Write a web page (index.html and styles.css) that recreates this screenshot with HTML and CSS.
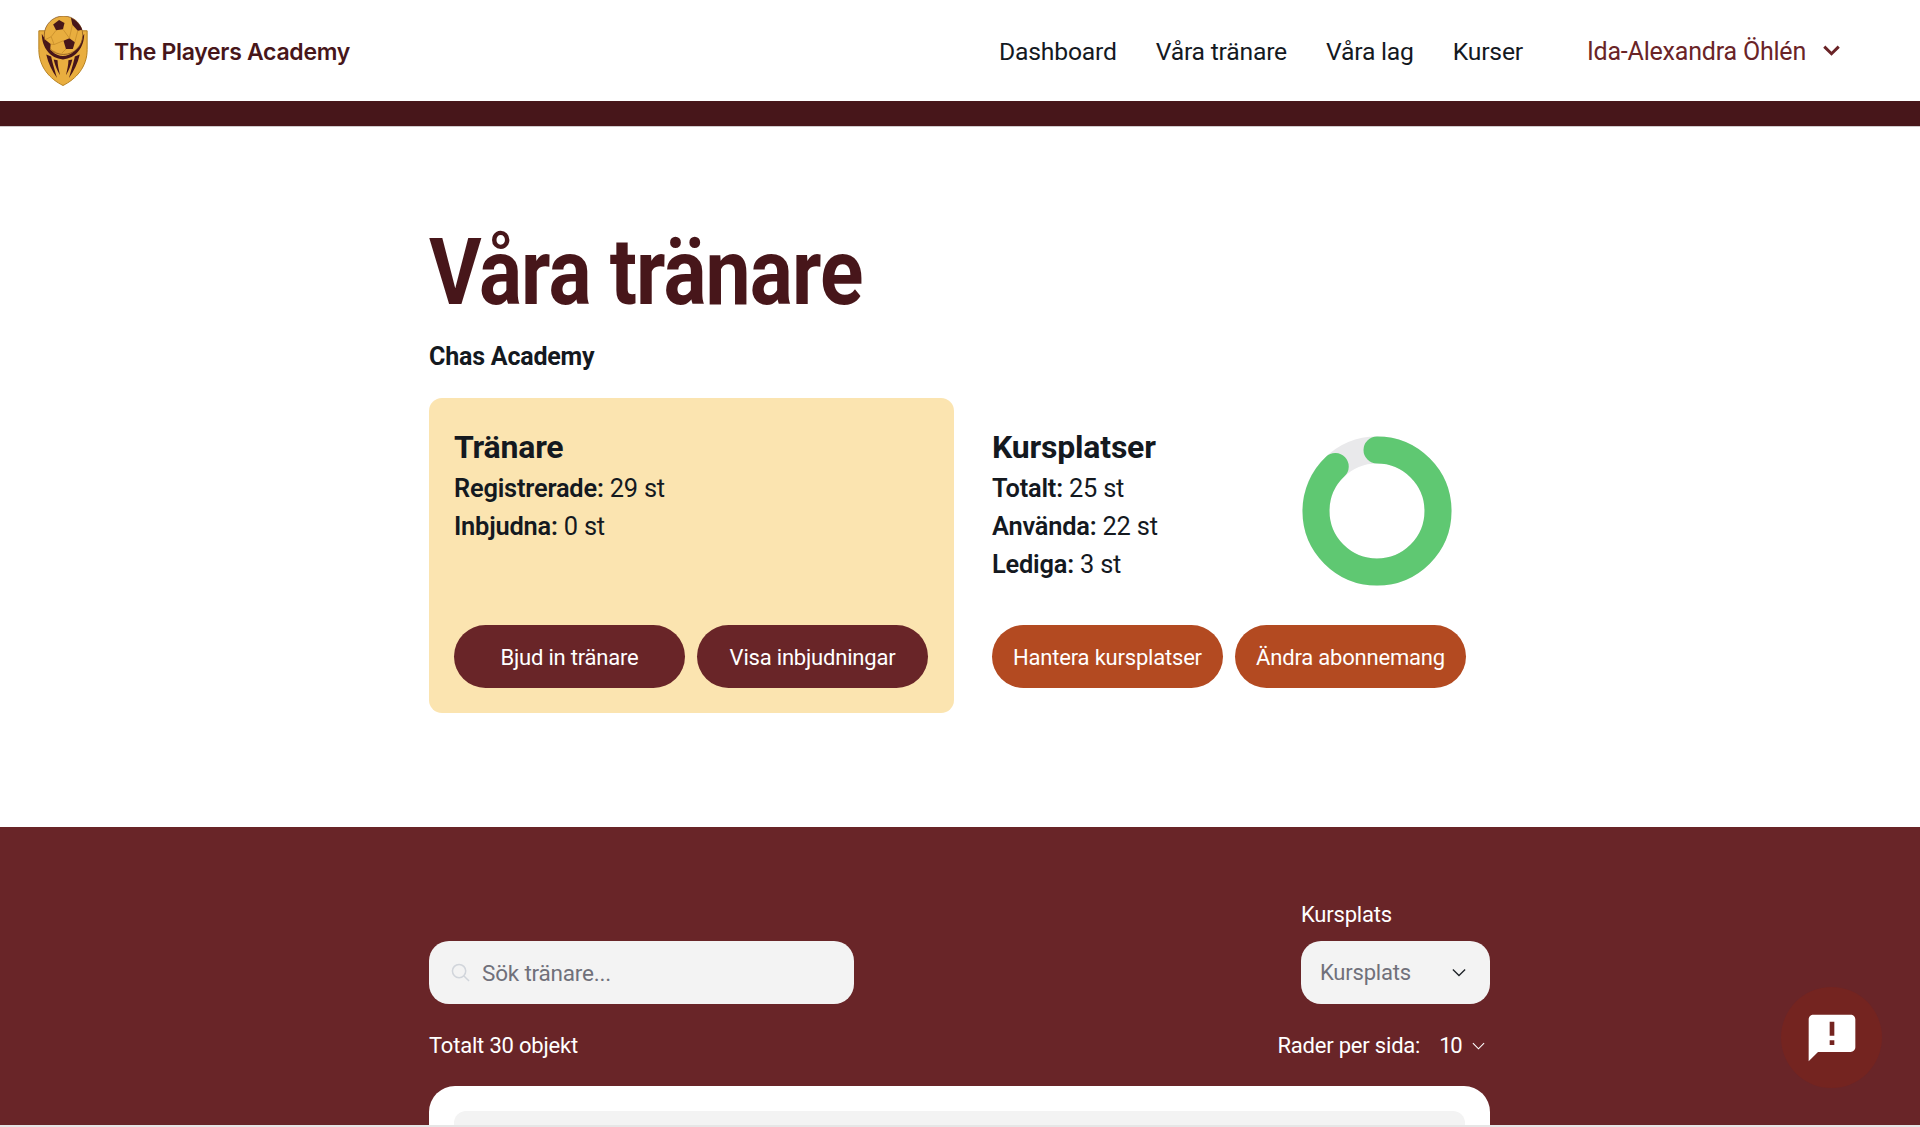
FILE: index.html
```html
<!DOCTYPE html>
<html lang="sv">
<head>
<meta charset="utf-8">
<title>Våra tränare</title>
<link rel="stylesheet" href="styles.css">
</head>
<body>
<header class="topbar">
  <a class="brand" href="#">
    <svg class="logo" viewBox="0 0 50 71" aria-hidden="true">
      <path d="M0.5 15H6L44 15H49.5V34C49.5 52 38 64 25 70.5C12 64 0.5 52 0.5 34Z" fill="#e9ae3f" stroke="#b5801f" stroke-width="1"/>
      <path d="M3.5 18C3.5 32 12 43 25 44C38 43 46.5 32 46.5 18L43 24C40 34 33 40.5 25 40.5C17 40.5 10 34 7 24Z" fill="#47161a"/>
      <path d="M8 39C10 48 14 56 19 63C16 53 14 46 13 41ZM15.500 44C17 50 19 55 22 60C20.500 54 19.500 49 19.500 45ZM42 39C40 48 36 56 31 63C34 53 36 46 37 41ZM34.500 44C33 50 31 55 28 60C29.500 54 30.500 49 30.500 45Z" fill="#47161a"/>
      <circle cx="25.500" cy="19.500" r="19.500" fill="#e9ae3f" stroke="#7a4a1c" stroke-width="0.7"/>
      <g fill="#47161a">
        <path d="M15 8.500L21 4L26.500 7L25 13.500L18 14.500Z"/>
        <path d="M33 1.800C38 4 42.500 8.500 44.500 14L40 15L34.500 9Z"/>
        <path d="M25.500 25L31.500 22.500L37 26.500L35 33.500L28 33.500Z"/>
        <path d="M7 24L12.500 28.500L12 34C9 32 7 28.500 6.200 24.500Z"/>
      </g>
      <g fill="none" stroke="#c58c2a" stroke-width="0.8">
        <path d="M18 14.500L13 21L16 29L25.500 25M25 13.500L31.500 22.500M34.500 9L31.500 22.500M40 15L37 26.500M13 21L7 24M16 29L12.500 28.500M28 33.500L24 37.500M12 34L18 37"/>
      </g>
    </svg>
    <span class="brand-name">The Players Academy</span>
  </a>
  <nav class="nav">
    <a href="#">Dashboard</a>
    <a href="#">Våra tränare</a>
    <a href="#">Våra lag</a>
    <a href="#">Kurser</a>
  </nav>
  <button class="user">
    <span>Ida-Alexandra Öhlén</span>
    <svg class="user-chev" viewBox="0 0 16 10" aria-hidden="true"><path d="M1.200 1.300L8 8L14.800 1.300" fill="none" stroke="currentColor" stroke-width="2.800"/></svg>
  </button>
</header>
<div class="band"></div>

<main>
  <section class="intro">
    <div class="wrap">
      <h1>Våra tränare</h1>
      <p class="org">Chas Academy</p>
      <div class="stats">
        <article class="card">
          <div class="info">
            <h2>Tränare</h2>
            <p><b>Registrerade:</b> 29 st</p>
            <p><b>Inbjudna:</b> 0 st</p>
          </div>
          <div class="actions">
            <button class="pill pill-dark">Bjud in tränare</button>
            <button class="pill pill-dark">Visa inbjudningar</button>
          </div>
        </article>
        <article class="card card-plain">
          <div class="info-row">
            <div class="info">
              <h2>Kursplatser</h2>
              <p><b>Totalt:</b> 25 st</p>
              <p><b>Använda:</b> 22 st</p>
              <p><b>Lediga:</b> 3 st</p>
            </div>
            <svg class="donut" viewBox="0 0 150 150" aria-hidden="true">
              <circle cx="75" cy="75" r="61" fill="none" stroke="#e9e9eb" stroke-width="27"/>
              <circle cx="75" cy="75" r="61" fill="none" stroke="#5fc872" stroke-width="27" stroke-linecap="round" pathLength="100" stroke-dasharray="88 100" transform="rotate(-90 75 75)"/>
            </svg>
          </div>
          <div class="actions">
            <button class="pill pill-orange">Hantera kursplatser</button>
            <button class="pill pill-orange">Ändra abonnemang</button>
          </div>
        </article>
      </div>
    </div>
  </section>

  <section class="list">
    <div class="wrap">
      <div class="filters">
        <label class="search">
          <svg class="search-icon" viewBox="0 0 20 20" aria-hidden="true"><circle cx="8.500" cy="8.500" r="7" fill="none" stroke="currentColor" stroke-width="1.600"/><path d="M13.600 13.600L19 19" fill="none" stroke="currentColor" stroke-width="1.600"/></svg>
          <span>Sök tränare...</span>
        </label>
        <div class="filter">
          <span class="filter-label">Kursplats</span>
          <div class="select">
            <span>Kursplats</span>
            <svg class="select-chev" viewBox="0 0 16 10" aria-hidden="true"><path d="M1 1.500L8 8.500L15 1.500" fill="none" stroke="currentColor" stroke-width="1.500"/></svg>
          </div>
        </div>
      </div>
      <div class="meta">
        <span>Totalt 30 objekt</span>
        <div class="rows">
          <span>Rader per sida:</span>
          <span class="rows-value">10</span>
          <svg class="rows-chev" viewBox="0 0 16 10" aria-hidden="true"><path d="M1 1.500L8 8.500L15 1.500" fill="none" stroke="currentColor" stroke-width="1.400"/></svg>
        </div>
      </div>
      <div class="table"><div class="table-head"></div></div>
    </div>
  </section>
</main>

<button class="feedback" aria-label="Feedback">
  <svg viewBox="0 0 24 24" aria-hidden="true"><path d="M20 2H4c-1.100 0-1.990.900-1.990 2L2 22l4-4h14c1.100 0 2-.900 2-2V4c0-1.100-.900-2-2-2zm-7 9h-2V5h2v6zm0 4h-2v-2h2v2z" fill="#fff"/></svg>
</button>
</body>
</html>
```

FILE: styles.css
```css
* { box-sizing: border-box; }
body {
  margin: 0;
  height: 1127px;
  overflow: hidden;
  background: #fff;
  border-bottom: 2px solid #e6e6e6;
  color: #14191f;
  font-family: Roboto, "Liberation Sans", sans-serif;
  font-size: 25.400px;
  letter-spacing: -0.2px;
}
button { font: inherit; letter-spacing: inherit; border: 0; cursor: pointer; }
a { color: inherit; text-decoration: none; }
p, h1, h2 { margin: 0; }

.topbar { height: 101px; display: flex; align-items: center; padding: 0 80px 0 38px; font-size: 25px; }
.brand { display: flex; align-items: center; gap: 26px; margin-right: auto; }
.logo { width: 50px; height: 70px; display: block; }
.brand-name { margin-top: 2px; font-family: Inter, Roboto, sans-serif; font-size: 23px; font-weight: 600; color: #47161a; letter-spacing: -0.3px; }
.nav { display: flex; gap: 39px; margin-top: 2px; font-size: 24.700px; }
.user { display: flex; align-items: center; gap: 17px; margin: 2px 0 0 64px; padding: 0; background: none; color: #6a2427; }
.user-chev { width: 17px; height: 11px; display: block; margin-top: -3px; }
.band { height: 26px; background: #47161a; border-bottom: 1px solid #cfcacb; }

.wrap { width: 1061px; margin-left: 429px; }

.intro { height: 700px; padding-top: 91px; }
h1 { font-size: 92px; line-height: 110px; font-weight: 700; color: #47161a; letter-spacing: -1px; transform: scaleX(0.875); transform-origin: left center; }
.org { margin-top: 10px; font-weight: 700; line-height: 38px; font-size: 25px; }
.stats { display: flex; margin-top: 22px; gap: 13px; }
.card { flex: none; width: 525px; height: 315px; padding: 25px; background: #fbe4b0; border-radius: 13px; display: flex; flex-direction: column; justify-content: space-between; }
.card-plain { background: none; }
.info-row { display: flex; justify-content: space-between; padding-right: 15px; }
h2 { margin-top: 2px; font-size: 32px; line-height: 44px; font-weight: 700; }
.info p { line-height: 38px; }
.info b { font-weight: 600; }
.donut { width: 150px; height: 150px; display: block; margin-top: 13px; }
.actions { display: flex; gap: 12px; }
.pill { width: 231px; height: 63px; border-radius: 32px; color: #fff; font-size: 22px; padding: 1px 0 0; }
.pill-dark { background: #692528; }
.pill-orange { background: #b34a21; }

.list { height: 298px; overflow: hidden; background: #692528; color: #fff; }
.list .wrap { padding-top: 74px; }
.filters { display: flex; justify-content: space-between; align-items: flex-end; }
.search { width: 425px; height: 63px; background: #f3f3f3; border-radius: 20px; display: flex; align-items: center; gap: 12px; padding-left: 22px; color: #70707a; font-size: 22.500px; }
.search-icon { width: 19px; height: 19px; color: #d1d5db; }
.filter { width: 189px; }
.filter-label { display: block; font-size: 22px; line-height: 28px; margin-bottom: 12px; }
.select { height: 63px; background: #f3f3f3; border-radius: 20px; display: flex; align-items: center; justify-content: space-between; padding: 0 24px 0 19px; color: #70707a; font-size: 22px; }
.select-chev { width: 14px; height: 9px; color: #1f2328; }
.meta { display: flex; justify-content: space-between; align-items: center; height: 82px; padding: 1px 5px 0 0; font-size: 22px; }
.rows { display: flex; align-items: center; }
.rows-value { margin-left: 19px; letter-spacing: -1.500px; }
.rows-chev { width: 13px; height: 8px; margin-left: 11px; }
.table { height: 80px; background: #fff; border-radius: 26px 26px 0 0; padding: 25px 25px 0; }
.table-head { height: 60px; background: #f3f3f3; border-radius: 12px; }

.feedback { position: fixed; right: 38px; bottom: 39px; width: 101px; height: 101px; border-radius: 50%; background: #742420; display: flex; align-items: center; justify-content: center; padding: 0; }
.feedback svg { width: 56px; height: 56px; display: block; }
```
